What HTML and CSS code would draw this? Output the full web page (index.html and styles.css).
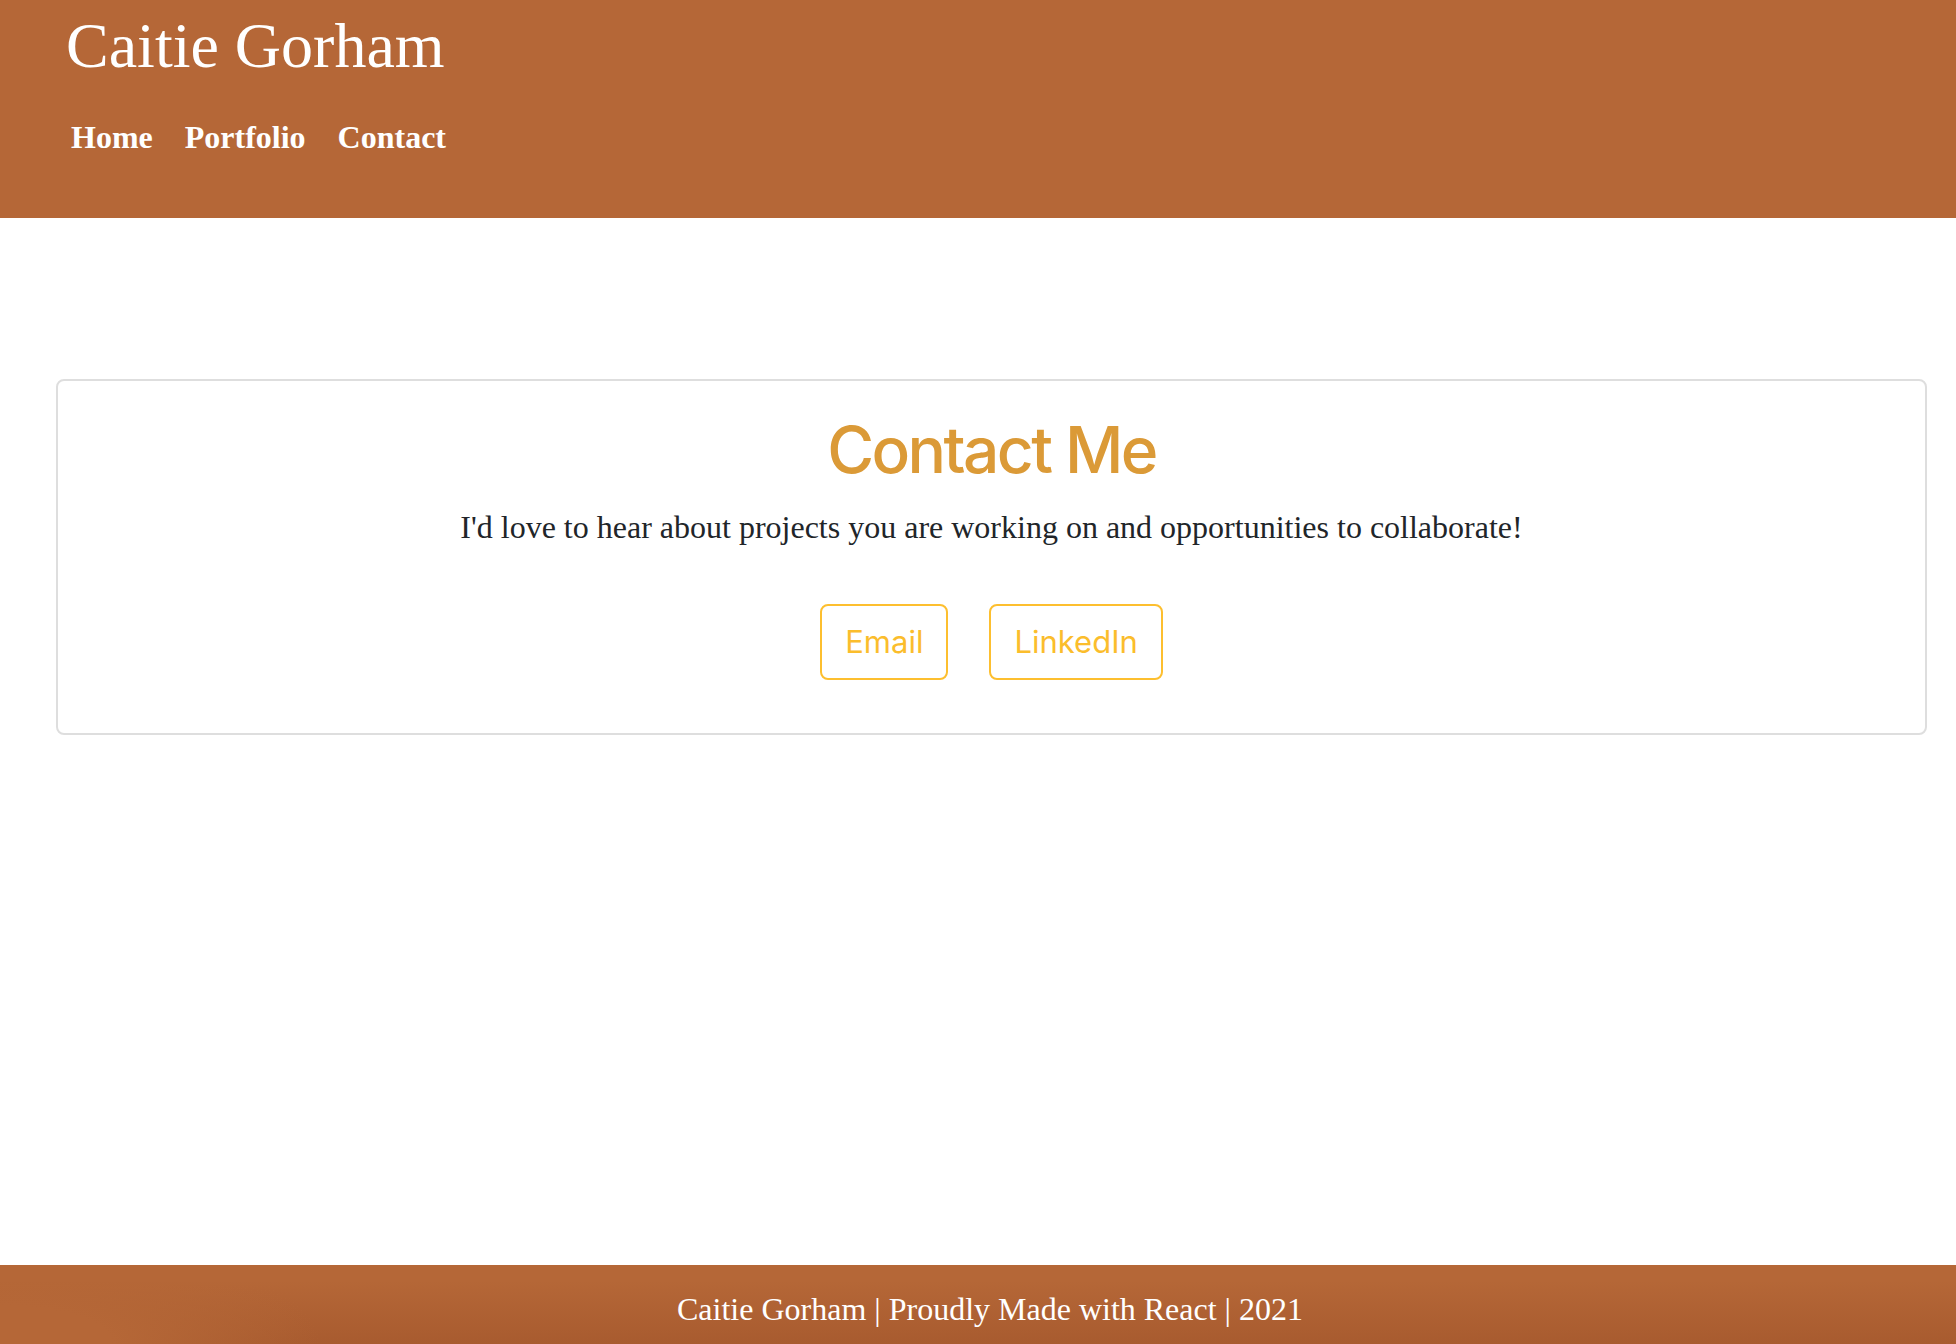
FILE: index.html
```html
<!DOCTYPE html>
<html lang="en">
<head>
<meta charset="utf-8">
<title>Caitie Gorham | Contact</title>
<link rel="stylesheet" href="styles.css">
</head>
<body>
<header class="site-header">
  <h1 class="site-title">Caitie Gorham</h1>
  <nav class="site-nav">
    <a class="nav-link" href="#">Home</a>
    <a class="nav-link" href="#">Portfolio</a>
    <a class="nav-link" href="#">Contact</a>
  </nav>
</header>
<main class="main">
  <section class="card">
    <h2 class="card-title">Contact Me</h2>
    <p class="card-text">I'd love to hear about projects you are working on and opportunities to collaborate!</p>
    <div class="actions">
      <a class="btn" href="#">Email</a>
      <a class="btn" href="#">LinkedIn</a>
    </div>
  </section>
</main>
<footer class="site-footer">
  <p class="footer-text">Caitie Gorham | Proudly Made with React | 2021</p>
</footer>
</body>
</html>
```

FILE: styles.css
```css
html, body {
  margin: 0;
  padding: 0;
}

body {
  min-height: 100vh;
  display: flex;
  flex-direction: column;
  font-family: "Liberation Serif", "Times New Roman", serif;
  color: #212529;
  background: #ffffff;
}

.site-header {
  height: 218px;
  box-sizing: border-box;
  background: #b56737;
  padding: 14px 0 0 66px;
}

.site-title {
  margin: 0;
  font-family: "Liberation Serif", "Times New Roman", serif;
  font-size: 64px;
  font-weight: 400;
  line-height: 64px;
  color: #ffffff;
}

.site-nav {
  display: flex;
  gap: 32px;
  margin-top: 35px;
  padding-left: 5px;
}

.nav-link {
  font-family: "Liberation Serif", "Times New Roman", serif;
  font-size: 32px;
  font-weight: 700;
  line-height: 48px;
  color: #ffffff;
  text-decoration: none;
}

.main {
  flex: 1;
  padding: 161px 29px 0 56px;
}

.card {
  border: 2px solid #dedede;
  border-radius: 8px;
  padding: 31px 32px 53px;
  text-align: center;
}

.card-title {
  margin: 0 0 14px;
  font-family: Inter, "Noto Sans", sans-serif;
  font-size: 64px;
  font-weight: 500;
  line-height: 1.2;
  letter-spacing: -0.04em;
  color: #db9a37;
}

.card-text {
  margin: 0 0 53px;
  font-size: 32px;
  line-height: 48px;
  color: #212529;
}

.actions {
  display: flex;
  justify-content: center;
  gap: 41px;
}

.btn {
  box-sizing: border-box;
  height: 76px;
  padding: 0 23px;
  border: 2px solid #fdbf2f;
  border-radius: 8px;
  font-family: Inter, "Noto Sans", sans-serif;
  font-size: 31px;
  font-weight: 400;
  line-height: 72px;
  color: #fbbd2c;
  text-decoration: none;
}

.site-footer {
  height: 79px;
  box-sizing: border-box;
  padding: 20px 0 0 24px;
  background:
    radial-gradient(ellipse 320px 110px at 0% 100%, rgba(181, 103, 55, 1) 35%, rgba(181, 103, 55, 0) 100%),
    linear-gradient(to bottom, #b56737 20%, #a85b2f 100%);
  text-align: center;
}

.footer-text {
  margin: 0;
  font-size: 32px;
  line-height: 48px;
  color: #ffffff;
}
```
